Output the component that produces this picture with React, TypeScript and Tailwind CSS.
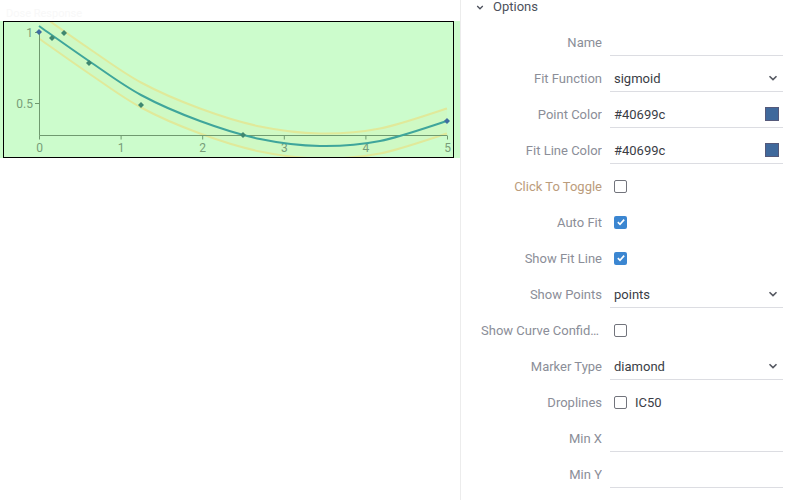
import React from 'react';

type Pt = [number, number];

const smoothPath = (pts: Pt[], dy = 0) => {
  const p = pts.map(([x, y]) => [x, y + dy] as Pt);
  let d = `M${p[0][0]},${p[0][1]}`;
  for (let i = 0; i < p.length - 1; i++) {
    const p0 = p[i - 1] || p[i];
    const p1 = p[i];
    const p2 = p[i + 1];
    const p3 = p[i + 2] || p2;
    const c1x = p1[0] + (p2[0] - p0[0]) / 6;
    const c1y = p1[1] + (p2[1] - p0[1]) / 6;
    const c2x = p2[0] - (p3[0] - p1[0]) / 6;
    const c2y = p2[1] - (p3[1] - p1[1]) / 6;
    d += ` C${c1x},${c1y} ${c2x},${c2y} ${p2[0]},${p2[1]}`;
  }
  return d;
};

// fit curve, in page pixels
const curve: Pt[] = [
  [39, 26],
  [89, 61],
  [141, 95],
  [200, 121],
  [260, 139],
  [320, 146],
  [380, 141],
  [447, 121],
];

const points: Pt[] = [
  [39, 32],
  [52, 38],
  [64, 33],
  [89, 63],
  [141, 105],
  [243, 135],
  [447, 121],
];

const xTicks = [0, 1, 2, 3, 4, 5];

const Chart = () => {
  const upper = smoothPath(curve, -12.5);
  const lower = smoothPath(curve, 12.5);
  const lowerBack = smoothPath([...curve].reverse(), 12.5).replace(/^M/, 'L');

  return (
    <svg viewBox="4 22 449 135" className="block h-full w-full" style={{ fontFamily: 'Roboto, sans-serif' }}>
      <path d={`${upper} ${lowerBack} Z`} fill="#e4ee9c" fillOpacity={0.15} />
      <path d={upper} fill="none" stroke="#e0e99a" strokeWidth={2} />
      <path d={lower} fill="none" stroke="#e0e99a" strokeWidth={2} />

      <g stroke="#6f996f" strokeWidth={1}>
        <line x1={39.5} y1={32} x2={39.5} y2={135.5} />
        <line x1={39.5} y1={135.5} x2={447} y2={135.5} />
        <line x1={35} y1={32.5} x2={39.5} y2={32.5} />
        <line x1={35} y1={103.5} x2={39.5} y2={103.5} />
        {xTicks.map((t) => (
          <line key={t} x1={39.5 + t * 81.6} y1={135.5} x2={39.5 + t * 81.6} y2={139.5} />
        ))}
      </g>

      <g fill="#789c78" fontSize={12}>
        <text x={33} y={36.5} textAnchor="end">1</text>
        <text x={33} y={107.5} textAnchor="end">0.5</text>
        {xTicks.map((t) => (
          <text key={t} x={39.5 + t * 81.6} y={152} textAnchor="middle">
            {t}
          </text>
        ))}
      </g>

      <path d={smoothPath(curve)} fill="none" stroke="#3fa59b" strokeWidth={2} />

      {points.map(([x, y], i) => (
        <path
          key={i}
          d={`M${x},${y - 3} L${x + 3},${y} L${x},${y + 3} L${x - 3},${y} Z`}
          fill={i === 0 || i === points.length - 1 ? '#3f6ea0' : '#3f8770'}
        />
      ))}
    </svg>
  );
};

const Chevron = ({ className = '' }: { className?: string }) => (
  <svg viewBox="0 0 10 6" className={className} fill="none" stroke="currentColor" strokeWidth={1.6}>
    <path d="M1.5 1.2 L5 4.6 L8.5 1.2" />
  </svg>
);

const Checkbox = ({ checked = false }: { checked?: boolean }) =>
  checked ? (
    <span className="flex h-[13px] w-[13px] items-center justify-center rounded-[2px] bg-[#3b86d1]">
      <svg viewBox="0 0 12 12" className="h-[10px] w-[10px]" fill="none" stroke="#fff" strokeWidth={2}>
        <path d="M2.2 6.2 L4.8 8.8 L9.8 3.2" />
      </svg>
    </span>
  ) : (
    <span className="block h-[13px] w-[13px] rounded-[2px] border border-[#72747c] bg-white" />
  );

const Row = ({
  label,
  children,
  labelClass = 'text-[#8b8e98]',
}: {
  label: string;
  children?: React.ReactNode;
  labelClass?: string;
}) => (
  <div className="flex h-9 items-center">
    <div className={`w-[141px] shrink-0 truncate pl-5 pt-[2px] text-right leading-[16px] ${labelClass}`}>{label}</div>
    <div className="ml-2 flex w-[173px] items-center">{children}</div>
  </div>
);

const TextInput = ({ value = '', select = false, swatch }: { value?: string; select?: boolean; swatch?: string }) => (
  <div className="flex h-7 w-full items-center justify-between border-b border-[#dcdde2] pl-1 pr-[4px] text-[#3a3d45]">
    <span className="pt-[1px]">{value}</span>
    {select && <Chevron className="mr-[1px] h-[6px] w-[10px] text-[#555861]" />}
    {swatch && <span className="h-[14px] w-[14px] border border-[#55597a]" style={{ background: swatch }} />}
  </div>
);

const CheckCell = ({ checked = false, text }: { checked?: boolean; text?: string }) => (
  <div className="flex items-center gap-2 pl-1 text-[#3a3d45]">
    <Checkbox checked={checked} />
    {text && <span>{text}</span>}
  </div>
);

export default function App() {
  return (
    <div
      className="flex h-[500px] w-[800px] bg-white text-[13px] leading-none"
      style={{ fontFamily: 'Roboto, "Noto Sans", sans-serif' }}
    >
      <div className="w-[460px] shrink-0">
        <div className="h-[21px] pl-[6px] pt-[8px] text-[11px] text-[#f8f8f8]">Dose Response</div>
        <div className="h-[137px] w-[460px] bg-[#ccfccc]">
          <div className="ml-[3px] h-full w-[451px] overflow-hidden border border-black">
            <Chart />
          </div>
        </div>
      </div>

      <div className="flex-1 border-l border-[#ececec]">
        <div className="flex h-6 items-start pl-[15px]">
          <div className="flex items-center gap-[9px] text-[#4c505b]">
            <Chevron className="h-[5px] w-[8px]" />
            <span className="leading-[14px]">Options</span>
          </div>
        </div>

        <Row label="Name">
          <TextInput />
        </Row>
        <Row label="Fit Function">
          <TextInput value="sigmoid" select />
        </Row>
        <Row label="Point Color">
          <TextInput value="#40699c" swatch="#40699c" />
        </Row>
        <Row label="Fit Line Color">
          <TextInput value="#40699c" swatch="#40699c" />
        </Row>
        <Row label="Click To Toggle" labelClass="text-[#bb9c7c]">
          <CheckCell />
        </Row>
        <Row label="Auto Fit">
          <CheckCell checked />
        </Row>
        <Row label="Show Fit Line">
          <CheckCell checked />
        </Row>
        <Row label="Show Points">
          <TextInput value="points" select />
        </Row>
        <Row label="Show Curve Confidence">
          <CheckCell />
        </Row>
        <Row label="Marker Type">
          <TextInput value="diamond" select />
        </Row>
        <Row label="Droplines">
          <CheckCell text="IC50" />
        </Row>
        <Row label="Min X">
          <TextInput />
        </Row>
        <Row label="Min Y">
          <TextInput />
        </Row>
      </div>
    </div>
  );
}
